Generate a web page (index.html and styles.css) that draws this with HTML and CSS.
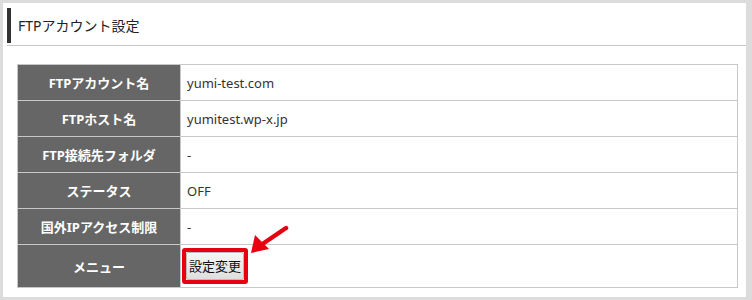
FILE: index.html
```html
<!DOCTYPE html>
<html lang="ja">
<head>
<meta charset="utf-8">
<title>FTPアカウント設定</title>
<link rel="stylesheet" href="styles.css">
</head>
<body>
<div class="panel">
  <div class="head">
    <h2 class="title">FTPアカウント設定</h2>
  </div>
  <table class="info">
    <tr><th>FTPアカウント名</th><td>yumi-test.com</td></tr>
    <tr><th>FTPホスト名</th><td>yumitest.wp-x.jp</td></tr>
    <tr><th>FTP接続先フォルダ</th><td>-</td></tr>
    <tr><th>ステータス</th><td>OFF</td></tr>
    <tr><th>国外IPアクセス制限</th><td>-</td></tr>
    <tr class="menu-row"><th>メニュー</th><td class="menu-cell">
      <span class="mark">
        <button class="btn" type="button">設定変更</button>
        <svg class="arrow" width="44" height="34" viewBox="0 0 44 34">
          <line x1="37" y1="3" x2="12" y2="20" stroke="#e60012" stroke-width="4.5" stroke-linecap="round"/>
          <polygon points="2,28 6,10 20,24" fill="#e60012"/>
        </svg>
      </span>
    </td></tr>
  </table>
</div>
</body>
</html>
```
FILE: styles.css
```css
html, body {
  margin: 0;
  padding: 0;
}
body {
  background: #dcdcdc;
  font-family: "Noto Sans", "Noto Sans CJK JP", sans-serif;
  color: #333;
  width: 752px;
  height: 300px;
  overflow: hidden;
}
.panel {
  background: #fff;
  margin: 3px 6px 0 3px;
  height: 294px;
  padding: 5px 0 0 4px;
  box-sizing: border-box;
}
.head {
  border-bottom: 1px solid #c8c8c8;
  padding-bottom: 2px;
}
.title {
  margin: 0;
  height: 35px;
  border-left: 4px solid #333;
  padding-left: 7px;
  font-size: 14px;
  font-weight: normal;
  line-height: 36px;
  color: #222;
}
.info {
  margin: 18px 0 0 10px;
  width: 721px;
  border-collapse: collapse;
  font-size: 13px;
}
.info th, .info td {
  border: 1px solid #c8c8c8;
  height: 35px;
  padding: 0;
}
.info th {
  width: 162px;
  background: #666;
  color: #fff;
  font-weight: bold;
  text-align: center;
}
.info td {
  padding-left: 6px;
  color: #333;
}
.menu-row th, .menu-row td {
  height: 42px;
}
.info td.menu-cell {
  padding-left: 1px;
}
.mark {
  position: relative;
  display: inline-block;
  border: 4px solid #e60012;
  border-radius: 3px;
  vertical-align: middle;
  line-height: 0;
}
.btn {
  font-family: "Noto Sans CJK JP", sans-serif;
  font-size: 13px;
  color: #111;
  height: 28px;
  width: 58px;
  padding: 0;
  border: 1px solid #bbb;
  border-radius: 2px;
  background: linear-gradient(#f6f6f6, #dedede);
  line-height: 26px;
}
.arrow {
  position: absolute;
  left: 63px;
  top: -27px;
}
```
